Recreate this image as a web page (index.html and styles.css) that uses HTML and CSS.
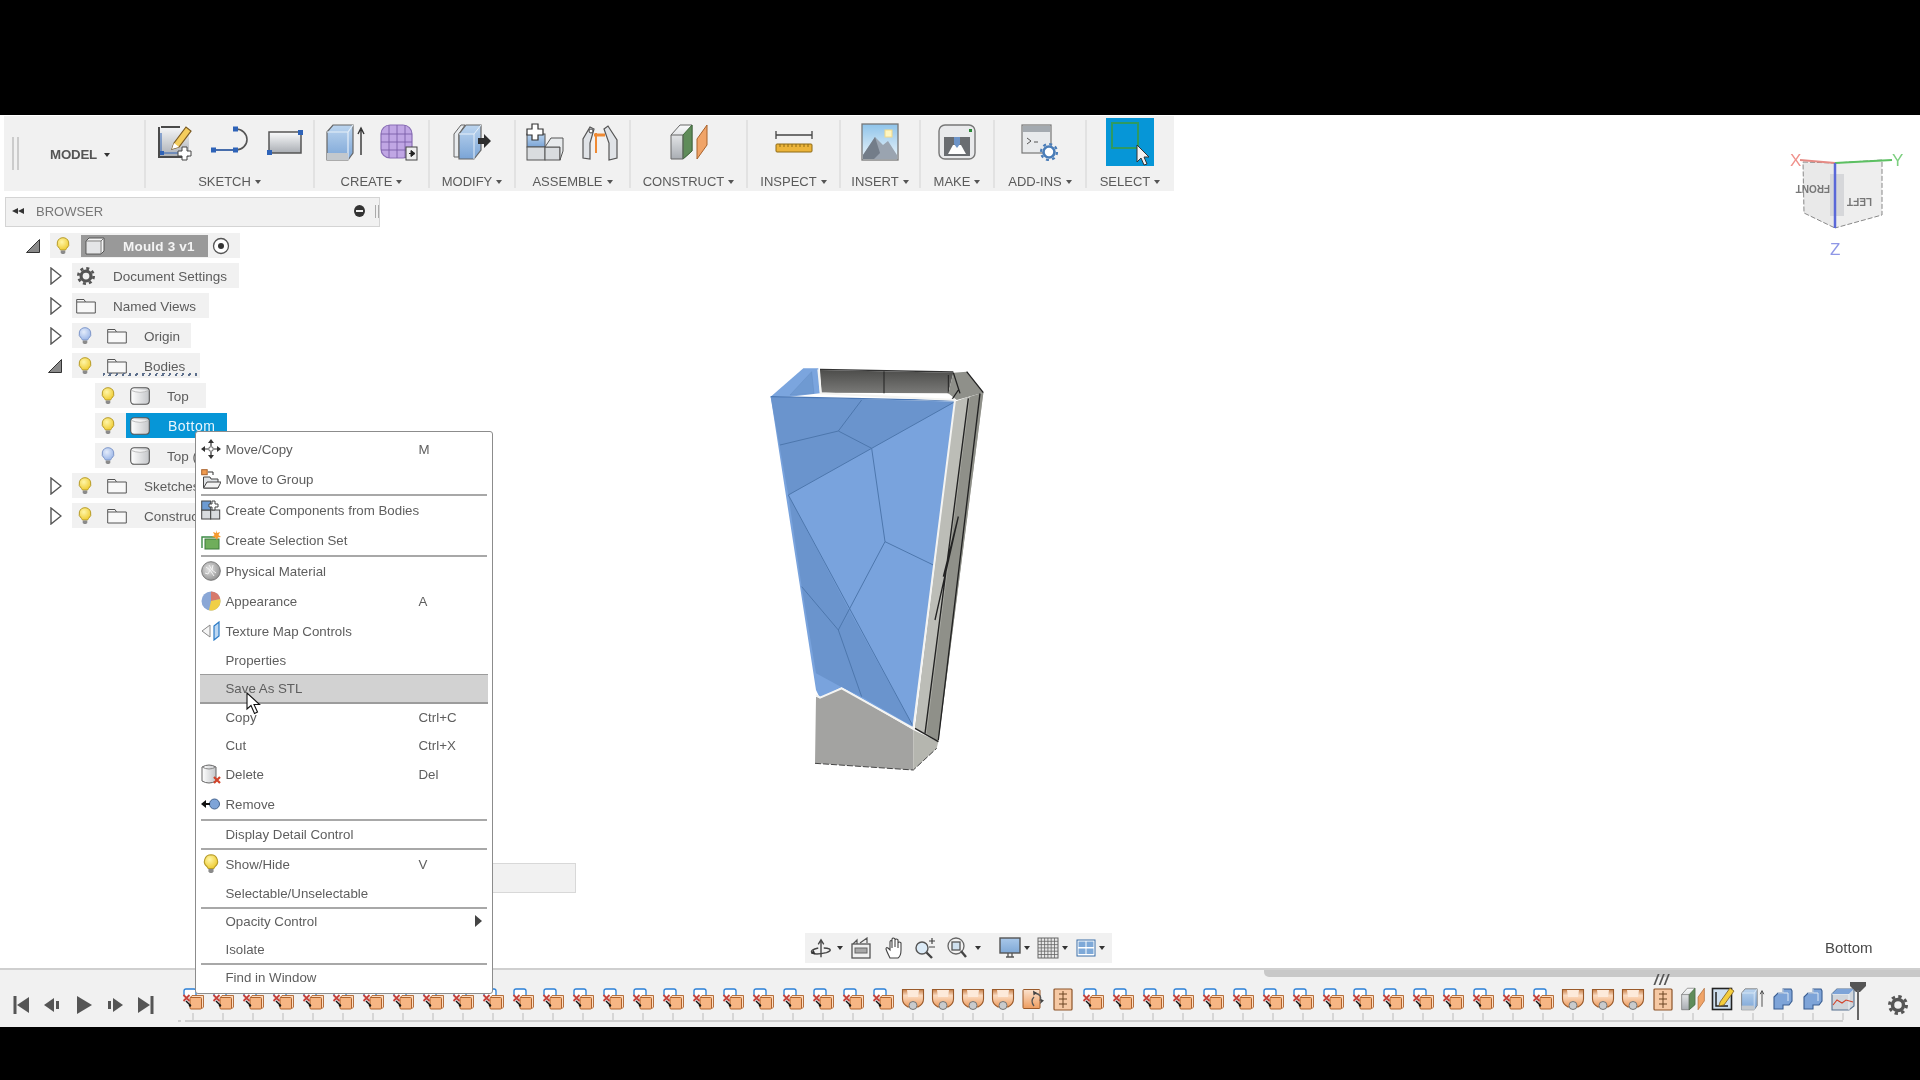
FILE: index.html
```html
<!DOCTYPE html>
<html lang="en">
<head>
<meta charset="utf-8">
<title>Mould 3 v1</title>
<link rel="stylesheet" href="styles.css">
</head>
<body>
<svg class="defs" xmlns="http://www.w3.org/2000/svg">
  <defs>
    <linearGradient id="gGrey" x1="0" y1="0" x2="0" y2="1"><stop offset="0" stop-color="#fafbfc"/><stop offset="1" stop-color="#a9adb3"/></linearGradient>
    <linearGradient id="gBlue" x1="0" y1="0" x2="0" y2="1"><stop offset="0" stop-color="#bcd5ef"/><stop offset="1" stop-color="#7aa4d6"/></linearGradient>
    <linearGradient id="gSky" x1="0" y1="0" x2="0" y2="1"><stop offset="0" stop-color="#8fc4ea"/><stop offset="1" stop-color="#eef6fb"/></linearGradient>
    <linearGradient id="gOrange" x1="0" y1="0" x2="0" y2="1"><stop offset="0" stop-color="#fbe3cf"/><stop offset="1" stop-color="#ee9c5e"/></linearGradient>
    <linearGradient id="gCone" x1="0" y1="0" x2="0" y2="1"><stop offset="0" stop-color="#c77f48"/><stop offset=".35" stop-color="#fbdcc3"/><stop offset="1" stop-color="#ee9c5e"/></linearGradient>
    <linearGradient id="gCyl" x1="0" y1="0" x2="1" y2="0"><stop offset="0" stop-color="#fff"/><stop offset="1" stop-color="#c4c6c9"/></linearGradient>
    <linearGradient id="gScreen" x1="0" y1="0" x2="0" y2="1"><stop offset="0" stop-color="#a9c8ea"/><stop offset="1" stop-color="#7fa8d6"/></linearGradient>
    <radialGradient id="gBulbY" cx=".4" cy=".35" r=".7"><stop offset="0" stop-color="#fff6a8"/><stop offset="1" stop-color="#eec92c"/></radialGradient>
    <radialGradient id="gBulbB" cx=".4" cy=".35" r=".7"><stop offset="0" stop-color="#e4ecfb"/><stop offset="1" stop-color="#97b3e6"/></radialGradient>
    <linearGradient id="gWall" x1="0" y1="0" x2="0" y2="1"><stop offset="0" stop-color="#4d4d4b"/><stop offset="1" stop-color="#7a7a78"/></linearGradient>
    <radialGradient id="gStone" cx=".4" cy=".4" r=".7"><stop offset="0" stop-color="#e4e4e4"/><stop offset="1" stop-color="#8a8a8a"/></radialGradient>

    <symbol id="i-sketch" viewBox="0 0 38 38"><path d="M2 5H25L33 2V34H2Z" fill="url(#gGrey)" stroke="none"/><path d="M5 4H24M3 4V34H28" fill="none" stroke="#4a4a4a" stroke-width="2"/><path d="M5 30H30M5 30V10" fill="none" stroke="#2f62b5" stroke-width="1"/><rect x="4" y="28" width="4" height="4" fill="#2f62b5"/><path d="M18 20L30 4L35 8L23 24L16 26Z" fill="#f4cd5d" stroke="#7b5a22" stroke-width="1.2"/><path d="M18 20L23 24L16 26Z" fill="#fff"/><path d="M26 24h5v4h4v5h-4v4h-5v-4h-4v-5h4z" fill="#fff" stroke="#444"/></symbol>
    <symbol id="i-line" viewBox="0 0 38 38"><path d="M3 27H25A11 10.500 0 0 0 25 6" fill="none" stroke="#555" stroke-width="1.6"/><path d="M3 27H25" stroke="#3a6ab8" stroke-width="1.6"/><rect x="0" y="24.500" width="5" height="5" fill="#2e63b8"/><rect x="22" y="24.500" width="5" height="5" fill="#2e63b8"/><rect x="22" y="3.500" width="5" height="5" fill="#2e63b8"/></symbol>
    <symbol id="i-rect" viewBox="0 0 38 38"><rect x="3" y="9" width="32" height="21" fill="url(#gGrey)" stroke="#555" stroke-width="1.5"/><rect x="1" y="27" width="5" height="5" fill="#2e63b8"/><rect x="32" y="7" width="5" height="5" fill="#2e63b8"/></symbol>
    <symbol id="i-extrude" viewBox="0 0 40 38"><path d="M1 9L7 2H27V30L22 37H1Z" fill="url(#gBlue)" stroke="#666" stroke-width="1.2"/><path d="M1 9H22V37M22 9L27 2" fill="none" stroke="#e6eff8" stroke-width="1.2"/><path d="M1 30H22V37H1Z" fill="#c3c8cd"/><path d="M35 32V7M32 11L35 5L38 11" fill="none" stroke="#333" stroke-width="1.4"/></symbol>
    <symbol id="i-mesh" viewBox="0 0 38 38"><rect x="1" y="2" width="31" height="33" rx="9" fill="#c0a6e4" stroke="#8a6fb6" stroke-width="1.2"/><path d="M1 11H32M1 19H32M1 27H32M9 2V35M17 2V35M25 2V35" stroke="#7a5da8" stroke-width=".9"/><rect x="26" y="24" width="11" height="13" fill="#eee" stroke="#444"/><path d="M29 30.500H33M31 27.500L35 30.500L31 33.500Z" fill="#222" stroke="#222"/></symbol>
    <symbol id="i-modify" viewBox="0 0 38 38"><path d="M1 34V11L8 2H12L6 11V34Z" fill="#e8ebee" stroke="#666"/><path d="M6 36V11L13 2H28V27L21 36Z" fill="url(#gBlue)" stroke="#666" stroke-width="1.2"/><path d="M6 11H21V36M21 11L28 2" fill="none" stroke="#e6eff8"/><path d="M25 15h6v-4l7 7-7 7v-4h-6z" fill="#2e2e2e"/></symbol>
    <symbol id="i-assemble" viewBox="0 0 38 38"><rect x="1" y="11" width="18" height="13" fill="url(#gBlue)" stroke="#555"/><rect x="1" y="24" width="18" height="13" fill="#d9dcdf" stroke="#555"/><rect x="19" y="24" width="15" height="13" fill="#d9dcdf" stroke="#555"/><path d="M19 24L25 15H37V28L34 37V24Z" fill="#e8ebed" stroke="#555"/><path d="M6 1h6v5h5v6h-5v5H6v-5H1V6h5z" fill="#fff" stroke="#333" stroke-width="1.2"/></symbol>
    <symbol id="i-joint" viewBox="0 0 38 38"><path d="M2 35V16L9 4L13 6L9 20V36Z" fill="#e0e3e7" stroke="#555" stroke-width="1.2"/><path d="M36 35V17L27 3L23 6L28 20V37Z" fill="#e0e3e7" stroke="#555" stroke-width="1.2"/><circle cx="10" cy="8" r="2" fill="#fff" stroke="#444"/><path d="M13 12L24 12" stroke="#ef8a34" stroke-width="3"/><path d="M15 10V30" stroke="#ef8a34" stroke-width="2"/></symbol>
    <symbol id="i-construct" viewBox="0 0 38 38"><path d="M1 12L10 2H22V28L13 36H1Z" fill="url(#gGrey)" stroke="#666"/><path d="M13 12L22 2V28L13 36Z" fill="#5f8c5a" stroke="#3f6b3b"/><path d="M1 12H13V36" fill="none" stroke="#666"/><path d="M27 36L27 16L37 2V22Z" fill="#f0a468" stroke="#a9622b"/></symbol>
    <symbol id="i-inspect" viewBox="0 0 38 24"><path d="M1 5H37M1 1V9M37 1V9" fill="none" stroke="#444" stroke-width="1.3"/><rect x="1" y="14" width="36" height="8" rx="1" fill="#ecb43a" stroke="#8e6a15"/><path d="M5 14v3M9 14v3M13 14v3M17 14v3M21 14v3M25 14v3M29 14v3M33 14v3" stroke="#8e6a15"/></symbol>
    <symbol id="i-insert" viewBox="0 0 38 38"><rect x="1" y="1" width="36" height="36" fill="url(#gSky)" stroke="#777" stroke-width="1.300"/><rect x="24" y="7" width="7" height="7" fill="#fff6c0" stroke="#f2d98a"/><path d="M2 32L14 14L22 22L27 18L36 32V36H2Z" fill="#9aa4b0"/><path d="M2 36V32L14 14L19 30L13 36Z" fill="#737d89"/></symbol>
    <symbol id="i-make" viewBox="0 0 38 38"><rect x="1" y="2" width="36" height="34" rx="6" fill="#e9eaec" stroke="#777" stroke-width="1.400"/><rect x="6" y="14" width="26" height="19" fill="#6a6d71"/><path d="M10 31L15 22H23L28 31Z" fill="#fff"/><path d="M16 14H22V21L19 25L16 21Z" fill="#6d94c8"/><rect x="31" y="6" width="3" height="3" fill="#2a8a37"/></symbol>
    <symbol id="i-addins" viewBox="0 0 38 38"><rect x="1" y="2" width="29" height="28" fill="#e8eaec" stroke="#777" stroke-width="1.200"/><rect x="2" y="3" width="27" height="6" fill="#a4aab0"/><path d="M6 15L10 18L6 21M13 19H17" fill="none" stroke="#555"/><circle cx="28" cy="29" r="5.500" fill="#fff" stroke="#4a7db8" stroke-width="2.600"/><circle cx="28" cy="29" r="8" fill="none" stroke="#4a7db8" stroke-width="2.200" stroke-dasharray="3 3.280"/></symbol>
    <symbol id="i-select" viewBox="0 0 48 48"><rect width="48" height="48" fill="#0696d7"/><rect x="6" y="5" width="26" height="25" fill="none" stroke="#2e9a62" stroke-width="2"/><path d="M31 27V44L35 40L38 47L41 46L38 39L43 39Z" fill="#f2f2f2" stroke="#333"/></symbol>

    <symbol id="bulb-y" viewBox="0 0 14 18"><path d="M7 .7A6 6 0 0 0 3.500 11.500L4.500 13H9.500L10.500 11.500A6 6 0 0 0 7 .7Z" fill="url(#gBulbY)" stroke="#b79c2b"/><path d="M4.700 13.500H9.300V16L8 17H6L4.700 16Z" fill="#8a8a8a"/></symbol>
    <symbol id="bulb-b" viewBox="0 0 14 18"><path d="M7 .7A6 6 0 0 0 3.500 11.500L4.500 13H9.500L10.500 11.500A6 6 0 0 0 7 .7Z" fill="url(#gBulbB)" stroke="#7f97c9"/><path d="M4.700 13.500H9.300V16L8 17H6L4.700 16Z" fill="#8a8a8a"/></symbol>
    <symbol id="folder" viewBox="0 0 20 16"><path d="M.7 15V1.500H8L9.500 4H19.300V15Z" fill="#f8f8f8" stroke="#555" stroke-width="1"/><path d="M1 4H9.500" stroke="#555"/></symbol>
    <symbol id="cyl" viewBox="0 0 20 18"><rect x=".7" y=".7" width="18.600" height="16.600" rx="3.500" fill="url(#gCyl)" stroke="#555" stroke-width="1.100"/><path d="M1.500 3.500Q10 7 18.500 3.500" fill="#fff" stroke="#bbb"/></symbol>
    <symbol id="comp" viewBox="0 0 20 18"><path d="M1 4L4 1H19V14L16 17H1Z" fill="#f4f4f4" stroke="#555"/><path d="M1 4H16V17M16 4L19 1" fill="none" stroke="#777"/><rect x="2" y="5" width="13" height="11" fill="#e4e5e7"/></symbol>
    <symbol id="gear" viewBox="0 0 20 20"><circle cx="10" cy="10" r="5.500" fill="none" stroke="#555" stroke-width="3.500"/><circle cx="10" cy="10" r="8.500" fill="none" stroke="#555" stroke-width="3" stroke-dasharray="3.340 3.340"/></symbol>
    <symbol id="radio" viewBox="0 0 18 18"><circle cx="9" cy="9" r="7.500" fill="#fff" stroke="#555" stroke-width="1.300"/><circle cx="9" cy="9" r="3" fill="#333"/></symbol>
    <symbol id="exp-r" viewBox="0 0 12 18"><path d="M1 1L11 9L1 17Z" fill="#fff" stroke="#555" stroke-width="1.400"/></symbol>
    <symbol id="exp-d" viewBox="0 0 14 14"><path d="M13.500 .5V13.500H.5Z" fill="#8a8a8a" stroke="#333"/></symbol>

    <symbol id="m-move" viewBox="0 0 20 20"><path d="M10 4V7M10 13V16M4 10H7M13 10H16" stroke="#333" stroke-width="1.200"/><path d="M10 0L13 4H7ZM10 20L13 16H7ZM0 10L4 7V13ZM20 10L16 7V13Z" fill="#333"/><circle cx="10" cy="10" r="2.300" fill="#fff" stroke="#555"/></symbol>
    <symbol id="m-group" viewBox="0 0 20 20"><rect x=".7" y=".7" width="5.500" height="5" fill="#ef9a4e" stroke="#a9622b"/><path d="M7 3H12V6" fill="none" stroke="#333"/><path d="M2.500 19V8H9L10 10H17V19Z" fill="#dfe2e5" stroke="#444"/><path d="M2.500 19L6 13H20L17 19Z" fill="#f3f3f3" stroke="#444"/></symbol>
    <symbol id="m-comps" viewBox="0 0 20 20"><rect x=".7" y="10" width="9" height="9" fill="#d9dcdf" stroke="#444"/><rect x="9.700" y="10" width="9" height="9" fill="#d9dcdf" stroke="#444"/><rect x=".7" y="1" width="9" height="9" fill="#6d9bd2" stroke="#444"/><path d="M11 1h3v3h3v3h-3v3h-3V7H8V4h3z" fill="#fff" stroke="#444"/></symbol>
    <symbol id="m-selset" viewBox="0 0 20 20"><path d="M1 18V7H14" fill="none" stroke="#3c8a45" stroke-width="1.400"/><rect x="4" y="9" width="14" height="10" fill="#6fae5b" stroke="#3c7a3a"/><path d="M15 0L16 3L19 2L17.500 5L20 7L17 7.500L16 10L14 7.500L11 7L13.500 5L12 2L15 3Z" fill="#f59a2e"/></symbol>
    <symbol id="m-phys" viewBox="0 0 20 20"><circle cx="10" cy="10" r="9.300" fill="url(#gStone)" stroke="#777"/><path d="M5 6L9 9L7 13M12 4L11 9L15 12M9 9L13 15M4 12L7 13M11 9L8 4" fill="none" stroke="#f2f2f2"/></symbol>
    <symbol id="m-app" viewBox="0 0 20 20"><circle cx="10" cy="10" r="9.500" fill="#8aa7d6"/><path d="M10 10L10 .5A9.500 9.500 0 0 1 19.300 8Z" fill="#d77a6c"/><path d="M10 10L19.300 8A9.500 9.500 0 0 1 8 19.300Z" fill="#f0cf47"/></symbol>
    <symbol id="m-tex" viewBox="0 0 20 20"><path d="M1 10L9 4V16Z" fill="#f5f5f5" stroke="#888"/><path d="M13 5L18 1V15L13 19Z" fill="#bcd7f2" stroke="#2b7bc6" stroke-width="1.200"/></symbol>
    <symbol id="m-del" viewBox="0 0 20 20"><path d="M1 3Q8 -1 15 3V17Q8 21 1 17Z" fill="url(#gCyl)" stroke="#666"/><path d="M1 3Q8 7 15 3" fill="none" stroke="#888"/><path d="M13 13L19 19M19 13L13 19" stroke="#d2432a" stroke-width="2.200"/></symbol>
    <symbol id="m-rem" viewBox="0 0 20 20"><circle cx="13.500" cy="10" r="5" fill="#7ea4d8" stroke="#44648f"/><path d="M0 10L5 6V9H9V11H5V14Z" fill="#111"/></symbol>

    <symbol id="tx" viewBox="0 0 24 24"><path d="M3 9V4Q3 2 5 2H13Q15 2 15 4V9" fill="#fff" stroke="#2a7fd6" stroke-width="1.300"/><path d="M9 11L11 8.500H22.500V20L20.500 22" fill="#fbdcc3" stroke="#b0622a" stroke-width=".9"/><rect x="9" y="10.500" width="11.500" height="11.500" rx="1" fill="#f7b684" stroke="#b0622a"/><path d="M2.500 8L8.500 14M8.500 8L2.500 14" stroke="#c8423b" stroke-width="1.800"/><path d="M5 14L9 18" stroke="#111" stroke-width="1.500"/><circle cx="9" cy="18.500" r="1.200" fill="#111"/></symbol>
    <symbol id="tcone" viewBox="0 0 24 24"><path d="M1.500 2.500H22.500V12Q22.500 17 17 20H7Q1.500 17 1.500 12Z" fill="url(#gCone)" stroke="#9a5a2a" stroke-width="1.100"/><path d="M6 3L7 10H17L18 3" fill="#fdeadb"/><circle cx="12" cy="18.500" r="4" fill="#c9cbcd" stroke="#777"/></symbol>
    <symbol id="tsync" viewBox="0 0 24 24"><rect x="2" y="2.500" width="17" height="19" rx="1" fill="url(#gOrange)" stroke="#9a5a2a"/><path d="M14 6Q22 8 19 14M13 19Q9 14 13 10" fill="none" stroke="#555" stroke-width="1.300"/><path d="M12 3.500L16 6L12.500 8.500ZM20 12L23 13.500L19 17Z" fill="#444"/></symbol>
    <symbol id="ttable" viewBox="0 0 24 24"><rect x="3" y="2" width="18" height="21" rx="1" fill="#f6c9a4" stroke="#8d5428" stroke-width="1.200"/><path d="M12 4V21M8 7H16M8 12H16M8 17H16" stroke="#6b4423" stroke-width="1"/></symbol>
    <symbol id="tcomb" viewBox="0 0 24 24"><path d="M3 22V10L7 6H12V2H20L21 4V14L18 18H12V22Z" fill="#7ea4d8" stroke="#3a5e92" stroke-width="1.100"/><path d="M12 6V2M7 6H17V14" fill="none" stroke="#dde8f5"/></symbol>
    <symbol id="tform" viewBox="0 0 24 24"><path d="M1 7L6 2H23V19L18 23H1Z" fill="#d0d5db" stroke="#56718f" stroke-width="1.100"/><path d="M1 7H18V23M18 7L23 2" fill="none" stroke="#eef2f5"/><path d="M1 7L6 2H23L18 7Z" fill="#7ea4d8"/><path d="M2 18L6 13L11 16L15 13L22 15" fill="none" stroke="#d2432a" stroke-width="1.100"/></symbol>
    <symbol id="tsk" viewBox="0 0 24 24"><rect x="1.500" y="1.500" width="19" height="21" fill="#cfe0f0" stroke="#222" stroke-width="1.600"/><path d="M5 5V19H17" fill="none" stroke="#222" stroke-width="1.500"/><path d="M9 15L19 1L23 4L13 18L8 19Z" fill="#f4cd3d" stroke="#7b5a22" stroke-width=".8"/></symbol>

    <symbol id="n-orbit" viewBox="0 0 24 24"><path d="M12 22V5M9 8L12 3L15 8" fill="none" stroke="#444" stroke-width="1.500"/><path d="M9 12Q0 14 2 17Q5 20 18 17Q24 15 21 13Q19 12 15 12" fill="none" stroke="#444" stroke-width="1.500"/><path d="M4 14L1 18L6 19Z" fill="#333"/></symbol>
    <symbol id="n-cam" viewBox="0 0 20 22"><path d="M2 7L6 3V7M9 6L16 1V6" fill="none" stroke="#555" stroke-width="1.200"/><rect x="1" y="7" width="18" height="14" fill="#f1f1f1" stroke="#555" stroke-width="1.300"/><rect x="4" y="11" width="12" height="5" fill="#a8a8a8" stroke="#666"/></symbol>
    <symbol id="n-hand" viewBox="0 0 20 22"><path d="M5 21Q2 15 1 12Q1 10 3 11L5 13V5Q5 3 7 4V11V2Q8 0 10 2V10V3Q11 1 13 3V11V6Q14 4 16 6V13Q16 19 13 21Z" fill="#fff" stroke="#444" stroke-width="1.100"/></symbol>
    <symbol id="n-zoom" viewBox="0 0 22 22"><circle cx="8" cy="11" r="6" fill="#dcebf7" stroke="#555" stroke-width="1.400"/><path d="M12.500 15.500L18 21" stroke="#444" stroke-width="2.400"/><path d="M15 4H21M18 1V7M15 10H21" stroke="#444" stroke-width="1.200"/></symbol>
    <symbol id="n-fit" viewBox="0 0 20 22"><circle cx="9" cy="9" r="8" fill="#f2f2f2" stroke="#666" stroke-width="1.300"/><rect x="5" y="5" width="8" height="8" fill="#cfe0ee" stroke="#555" stroke-width="1.300"/><path d="M14 14L19 20" stroke="#444" stroke-width="2.400"/></symbol>
    <symbol id="n-disp" viewBox="0 0 22 22"><rect x="1" y="1" width="20" height="15" fill="url(#gScreen)" stroke="#555" stroke-width="1.400"/><path d="M7 20H15M9 16V20M13 16V20" stroke="#555" stroke-width="1.300"/></symbol>
    <symbol id="n-grid" viewBox="0 0 22 22"><rect x="1" y="1" width="20" height="20" fill="#e8e8e8" stroke="#666"/><path d="M4.300 1V21M7.600 1V21M10.900 1V21M14.200 1V21M17.500 1V21M1 4.300H21M1 7.600H21M1 10.900H21M1 14.200H21M1 17.500H21" stroke="#666" stroke-width=".8"/></symbol>
    <symbol id="n-view" viewBox="0 0 20 20"><rect x="1" y="2" width="18" height="16" fill="#fff" stroke="#3a6ea8"/><rect x="2.500" y="3.500" width="7" height="5.500" fill="#7ea9d8"/><rect x="10.500" y="3.500" width="7" height="5.500" fill="#7ea9d8"/><rect x="2.500" y="10.500" width="7" height="5.500" fill="#7ea9d8"/><rect x="10.500" y="10.500" width="7" height="5.500" fill="#7ea9d8"/></symbol>
  </defs>
</svg>

<div class="black-top"></div>
<main class="app">
  <header class="toolbar">
    <div class="tg tg-model"><span class="grip"></span><span class="model-label">MODEL<i class="caret dark"></i></span></div>
    <div class="tg tg-sketch"><div class="ticons g17"><svg class="ic"><use href="#i-sketch"/></svg><svg class="ic"><use href="#i-line"/></svg><svg class="ic"><use href="#i-rect"/></svg></div><div class="tlabel">SKETCH<i class="caret"></i></div></div>
    <div class="tg tg-create"><div class="ticons g14"><svg class="ic wide"><use href="#i-extrude"/></svg><svg class="ic"><use href="#i-mesh"/></svg></div><div class="tlabel">CREATE<i class="caret"></i></div></div>
    <div class="tg tg-modify"><div class="ticons"><svg class="ic"><use href="#i-modify"/></svg></div><div class="tlabel">MODIFY<i class="caret"></i></div></div>
    <div class="tg tg-assemble"><div class="ticons g17"><svg class="ic"><use href="#i-assemble"/></svg><svg class="ic"><use href="#i-joint"/></svg></div><div class="tlabel">ASSEMBLE<i class="caret"></i></div></div>
    <div class="tg tg-construct"><div class="ticons"><svg class="ic"><use href="#i-construct"/></svg></div><div class="tlabel">CONSTRUCT<i class="caret"></i></div></div>
    <div class="tg tg-inspect"><div class="ticons"><svg class="ic-rule"><use href="#i-inspect"/></svg></div><div class="tlabel">INSPECT<i class="caret"></i></div></div>
    <div class="tg tg-insert"><div class="ticons"><svg class="ic"><use href="#i-insert"/></svg></div><div class="tlabel">INSERT<i class="caret"></i></div></div>
    <div class="tg tg-make"><div class="ticons"><svg class="ic"><use href="#i-make"/></svg></div><div class="tlabel">MAKE<i class="caret"></i></div></div>
    <div class="tg tg-addins"><div class="ticons"><svg class="ic"><use href="#i-addins"/></svg></div><div class="tlabel">ADD-INS<i class="caret"></i></div></div>
    <div class="tg tg-select"><div class="ticons"><svg class="ic-select"><use href="#i-select"/></svg></div><div class="tlabel">SELECT<i class="caret"></i></div></div>
  </header>

  <section class="browser-head">
    <span class="rew"><i></i><i></i></span>
    <span class="browser-title">BROWSER</span>
    <span class="minus"></span>
    <span class="bgrip"></span>
  </section>

  <nav class="tree">
    <div class="row d0"><svg class="exp-d"><use href="#exp-d"/></svg><div class="cell root-cell"><svg class="bulb"><use href="#bulb-y"/></svg><div class="root-name"><svg class="ti-comp"><use href="#comp"/></svg><b>Mould 3 v1</b></div><svg class="ti-radio"><use href="#radio"/></svg></div></div>
    <div class="row d1"><svg class="exp-r"><use href="#exp-r"/></svg><div class="cell nb pr12"><svg class="ti-icon"><use href="#gear"/></svg><span class="tx">Document Settings</span></div></div>
    <div class="row d1"><svg class="exp-r"><use href="#exp-r"/></svg><div class="cell nb pr13"><svg class="ti-icon"><use href="#folder"/></svg><span class="tx">Named Views</span></div></div>
    <div class="row d1"><svg class="exp-r"><use href="#exp-r"/></svg><div class="cell pr11"><svg class="bulb"><use href="#bulb-b"/></svg><svg class="ti-icon after"><use href="#folder"/></svg><span class="tx">Origin</span></div></div>
    <div class="row d1"><svg class="exp-d2"><use href="#exp-d"/></svg><div class="cell pr15 wavy"><svg class="bulb"><use href="#bulb-y"/></svg><svg class="ti-icon after"><use href="#folder"/></svg><span class="tx">Bodies</span></div></div>
    <div class="row d2"><div class="cell pr17"><svg class="bulb"><use href="#bulb-y"/></svg><svg class="ti-icon after"><use href="#cyl"/></svg><span class="tx">Top</span></div></div>
    <div class="row d2"><div class="cell cell-sel"><svg class="bulb"><use href="#bulb-y"/></svg><div class="sel"><svg class="ti-icon"><use href="#cyl"/></svg><span class="tx">Bottom</span></div></div></div>
    <div class="row d2"><div class="cell pr17"><svg class="bulb"><use href="#bulb-b"/></svg><svg class="ti-icon after"><use href="#cyl"/></svg><span class="tx">Top (1)</span></div></div>
    <div class="row d1"><svg class="exp-r"><use href="#exp-r"/></svg><div class="cell pr17"><svg class="bulb"><use href="#bulb-y"/></svg><svg class="ti-icon after"><use href="#folder"/></svg><span class="tx">Sketches</span></div></div>
    <div class="row d1"><svg class="exp-r"><use href="#exp-r"/></svg><div class="cell pr17"><svg class="bulb"><use href="#bulb-y"/></svg><svg class="ti-icon after"><use href="#folder"/></svg><span class="tx">Construction</span></div></div>
  </nav>

  <svg class="model" viewBox="0 0 840 1290">
    <path d="M92 140L190 55H235L240 130L150 140Z" fill="#7ba5de"/>
    <path d="M150 135L215 65L222 130Z" fill="#6f9ad2" stroke="#5f86bd"/>
    <path d="M240 60L640 68L625 130L245 128Z" fill="url(#gWall)"/>
    <path d="M432 64V130M625 75L625 130" stroke="#222" stroke-width="3"/>
    <path d="M240 58L640 66" stroke="#333" stroke-width="4"/>
    <path d="M640 68L680 65L730 128L650 150L625 130Z" fill="#8f908a"/>
    <path d="M645 155L730 128L595 1175L525 1135Z" fill="#a9aaa3"/>
    <path d="M645 155L685 140L555 1150L525 1135Z" fill="#bcbdb7"/>
    <path d="M690 140L730 128L595 1175L560 1150Z" fill="#8f9089"/>
    <path d="M685 145L555 1150M720 130L595 1170M655 500L585 810M610 680L655 500M635 150L655 120M680 65L730 128M640 68L660 130" stroke="#222" stroke-width="4" fill="none"/>
    <path d="M92 140L645 155L520 1135L305 1012L240 1045L228 1020Z" fill="#79a3dd"/>
    <path d="M92 140L645 155L395 295L145 435Z" fill="#6a94cd"/>
    <path d="M145 435L330 785L295 840L185 710Z" fill="#6a94cd"/>
    <path d="M185 710L295 840L365 1040L305 1012L228 970Z" fill="#6a94cd"/>
    <path d="M295 840L330 785L520 1130L365 1040Z" fill="#6a94cd"/>
    <path d="M120 285L295 243L365 150M295 243L395 295M645 155L145 435M395 295L435 575L580 645M435 575L295 840M145 435L520 1130M185 710L295 840L365 1040" fill="none" stroke="#4d77ad" stroke-width="3"/>
    <path d="M92 140L645 152" stroke="#4b78b5" stroke-width="4"/>
    <path d="M228 1040L240 1045L305 1015L520 1140V1260L225 1240Z" fill="#a3a3a1"/>
    <path d="M520 1140L595 1175L590 1195L520 1260Z" fill="#b5b6af"/>
    <path d="M525 1135L595 1175" stroke="#222" stroke-width="4"/>
    <path d="M225 1240L520 1260L590 1195" fill="none" stroke="#444" stroke-width="3" stroke-dasharray="18 6"/>
    <path d="M235 58L242 130L645 150L520 1135L305 1015L240 1043L228 1035" fill="none" stroke="#f4f4f2" stroke-width="6"/>
  </svg>

  <svg class="viewcube" viewBox="0 0 150 125">
    <path d="M33 22L65 23V88L34 73Z" fill="#e9e9e9" stroke="#888" stroke-dasharray="5 2"/>
    <path d="M65 23L112 20V75L65 88Z" fill="#eeeeee" stroke="#888" stroke-dasharray="5 2"/>
    <rect x="60" y="34" width="14" height="42" fill="#d6d7da"/>
    <text class="cube-t" transform="translate(60 45) rotate(180)">FRONT</text>
    <text class="cube-t" transform="translate(102 58) rotate(180)">LEFT</text>
    <path d="M30 20L65 23" stroke="#e58a84" stroke-width="2"/>
    <path d="M65 23L122 20" stroke="#5cc062" stroke-width="2"/>
    <path d="M65 23V88" stroke="#5a68d8" stroke-width="2.500"/>
    <text class="ax x" x="20" y="26">X</text>
    <text class="ax y" x="122" y="26">Y</text>
    <text class="ax z" x="60" y="115">Z</text>
  </svg>

  <div class="ghost-box"></div>
  <div class="sel-name">Bottom</div>

  <div class="navbar">
    <svg class="nv"><use href="#n-orbit"/></svg><i class="caret dark ml5"></i>
    <svg class="nv nw20 ml8"><use href="#n-cam"/></svg>
    <svg class="nv nw20 ml14"><use href="#n-hand"/></svg>
    <svg class="nv ml9"><use href="#n-zoom"/></svg>
    <svg class="nv nw20 ml11"><use href="#n-fit"/></svg><i class="caret dark ml8"></i>
    <svg class="nv ml18"><use href="#n-disp"/></svg><i class="caret dark ml3"></i>
    <svg class="nv ml7"><use href="#n-grid"/></svg><i class="caret dark ml3"></i>
    <svg class="nv nw20 ml8"><use href="#n-view"/></svg><i class="caret dark ml3"></i>
  </div>

  <footer class="timeline">
    <div class="transport">
      <svg class="pb" viewBox="0 0 16 18"><path d="M2 0V18" stroke="#555" stroke-width="3"/><path d="M16 1V17L4 9Z" fill="#555"/></svg>
      <svg class="pb" viewBox="0 0 16 18"><path d="M10 2V16L0 9Z" fill="#555"/><rect x="12" y="5" width="3" height="8" fill="#555"/></svg>
      <svg class="pb" viewBox="0 0 16 18"><path d="M1 0V18L16 9Z" fill="#555"/></svg>
      <svg class="pb" viewBox="0 0 16 18"><path d="M6 2V16L16 9Z" fill="#555"/><rect x="1" y="5" width="3" height="8" fill="#555"/></svg>
      <svg class="pb" viewBox="0 0 16 18"><path d="M0 1V17L12 9Z" fill="#555"/><path d="M14 0V18" stroke="#555" stroke-width="3"/></svg>
    </div>
    <div class="track">
      <span class="ti"><svg><use href="#tx"/></svg></span><span class="ti"><svg><use href="#tx"/></svg></span><span class="ti"><svg><use href="#tx"/></svg></span><span class="ti"><svg><use href="#tx"/></svg></span><span class="ti"><svg><use href="#tx"/></svg></span><span class="ti"><svg><use href="#tx"/></svg></span><span class="ti"><svg><use href="#tx"/></svg></span><span class="ti"><svg><use href="#tx"/></svg></span>
      <span class="ti"><svg><use href="#tx"/></svg></span><span class="ti"><svg><use href="#tx"/></svg></span><span class="ti"><svg><use href="#tx"/></svg></span><span class="ti"><svg><use href="#tx"/></svg></span><span class="ti"><svg><use href="#tx"/></svg></span><span class="ti"><svg><use href="#tx"/></svg></span><span class="ti"><svg><use href="#tx"/></svg></span><span class="ti"><svg><use href="#tx"/></svg></span>
      <span class="ti"><svg><use href="#tx"/></svg></span><span class="ti"><svg><use href="#tx"/></svg></span><span class="ti"><svg><use href="#tx"/></svg></span><span class="ti"><svg><use href="#tx"/></svg></span><span class="ti"><svg><use href="#tx"/></svg></span><span class="ti"><svg><use href="#tx"/></svg></span><span class="ti"><svg><use href="#tx"/></svg></span><span class="ti"><svg><use href="#tx"/></svg></span>
      <span class="ti"><svg><use href="#tcone"/></svg></span><span class="ti"><svg><use href="#tcone"/></svg></span><span class="ti"><svg><use href="#tcone"/></svg></span><span class="ti"><svg><use href="#tcone"/></svg></span><span class="ti"><svg><use href="#tsync"/></svg></span><span class="ti"><svg><use href="#ttable"/></svg></span>
      <span class="ti"><svg><use href="#tx"/></svg></span><span class="ti"><svg><use href="#tx"/></svg></span><span class="ti"><svg><use href="#tx"/></svg></span><span class="ti"><svg><use href="#tx"/></svg></span><span class="ti"><svg><use href="#tx"/></svg></span><span class="ti"><svg><use href="#tx"/></svg></span><span class="ti"><svg><use href="#tx"/></svg></span><span class="ti"><svg><use href="#tx"/></svg></span>
      <span class="ti"><svg><use href="#tx"/></svg></span><span class="ti"><svg><use href="#tx"/></svg></span><span class="ti"><svg><use href="#tx"/></svg></span><span class="ti"><svg><use href="#tx"/></svg></span><span class="ti"><svg><use href="#tx"/></svg></span><span class="ti"><svg><use href="#tx"/></svg></span><span class="ti"><svg><use href="#tx"/></svg></span><span class="ti"><svg><use href="#tx"/></svg></span>
      <span class="ti"><svg><use href="#tcone"/></svg></span><span class="ti"><svg><use href="#tcone"/></svg></span><span class="ti"><svg><use href="#tcone"/></svg></span><span class="ti"><svg><use href="#ttable"/></svg></span>
      <span class="ti"><svg><use href="#i-construct"/></svg></span><span class="ti"><svg><use href="#tsk"/></svg></span><span class="ti"><svg><use href="#i-extrude"/></svg></span><span class="ti"><svg><use href="#tcomb"/></svg></span><span class="ti"><svg><use href="#tcomb"/></svg></span><span class="ti"><svg><use href="#tform"/></svg></span>
    </div>
    <svg class="tl-gear"><use href="#gear"/></svg>
    <div class="thumb"></div>
    <div class="group-mark">///</div>
    <svg class="marker" viewBox="0 0 16 38"><path d="M0 0H16V4L10 10H6L0 4Z" fill="#555"/><rect x="7" y="8" width="2" height="30" fill="#666"/></svg>
  </footer>

  <div class="ctx">
    <div class="mi"><svg class="mic"><use href="#m-move"/></svg><span class="ml">Move/Copy</span><span class="ms">M</span></div>
    <div class="mi"><svg class="mic"><use href="#m-group"/></svg><span class="ml">Move to Group</span></div>
    <div class="sep"></div>
    <div class="mi"><svg class="mic"><use href="#m-comps"/></svg><span class="ml">Create Components from Bodies</span></div>
    <div class="mi"><svg class="mic"><use href="#m-selset"/></svg><span class="ml">Create Selection Set</span></div>
    <div class="sep"></div>
    <div class="mi"><svg class="mic"><use href="#m-phys"/></svg><span class="ml">Physical Material</span></div>
    <div class="mi"><svg class="mic"><use href="#m-app"/></svg><span class="ml">Appearance</span><span class="ms">A</span></div>
    <div class="mi"><svg class="mic"><use href="#m-tex"/></svg><span class="ml">Texture Map Controls</span></div>
    <div class="mi p28"><span class="mic"></span><span class="ml">Properties</span></div>
    <div class="mi hover"><span class="mic"></span><span class="ml">Save As STL</span></div>
    <div class="mi p27"><span class="mic"></span><span class="ml">Copy</span><span class="ms">Ctrl+C</span></div>
    <div class="mi p28"><span class="mic"></span><span class="ml">Cut</span><span class="ms">Ctrl+X</span></div>
    <div class="mi"><svg class="mic"><use href="#m-del"/></svg><span class="ml">Delete</span><span class="ms">Del</span></div>
    <div class="mi"><svg class="mic"><use href="#m-rem"/></svg><span class="ml">Remove</span></div>
    <div class="sep"></div>
    <div class="mi p28"><span class="mic"></span><span class="ml">Display Detail Control</span></div>
    <div class="sep"></div>
    <div class="mi"><svg class="mic"><use href="#bulb-y"/></svg><span class="ml">Show/Hide</span><span class="ms">V</span></div>
    <div class="mi p28"><span class="mic"></span><span class="ml">Selectable/Unselectable</span></div>
    <div class="sep"></div>
    <div class="mi p27"><span class="mic"></span><span class="ml">Opacity Control</span><i class="sub"></i></div>
    <div class="mi p28"><span class="mic"></span><span class="ml">Isolate</span></div>
    <div class="sep"></div>
    <div class="mi p27"><span class="mic"></span><span class="ml">Find in Window</span></div>
  </div>

  <svg class="cursor" viewBox="0 0 16 23"><path d="M1 1V17L5 13.500L8.500 21.500L11.500 20L8 12.500H13.500Z" fill="#fff" stroke="#111" stroke-width="1.100"/></svg>
</main>
<div class="black-bottom"></div>
</body>
</html>
```

FILE: styles.css
```css
* { box-sizing: border-box; }
html, body { margin: 0; height: 100%; }
body {
  display: flex;
  flex-direction: column;
  height: 1080px;
  overflow: hidden;
  background: #000;
  font-family: "Liberation Sans", Arial, sans-serif;
  color: #555;
}
.defs { position: absolute; width: 0; height: 0; }
.black-top { height: 115px; flex: none; background: #000; }
.black-bottom { height: 53px; flex: none; background: #000; }

.app {
  position: relative;
  flex: none;
  height: 912px;
  background: #fff;
  display: flex;
  flex-direction: column;
  overflow: hidden;
  filter: blur(.45px);
}

/* toolbar */
.toolbar {
  display: flex;
  flex: none;
  width: 1170px;
  height: 75px;
  margin: 1px 0 0 4px;
  background: #f1f1f1;
}
.tg {
  position: relative;
  display: flex;
  flex-direction: column;
  align-items: center;
  flex: none;
}
.tg + .tg::before {
  content: "";
  position: absolute;
  left: -1px;
  top: 4px;
  bottom: 3px;
  width: 2px;
  background: #e2e2e2;
}
.tg-model { width: 141px; flex-direction: row; }
.tg-sketch { width: 169px; }
.tg-create { width: 115px; }
.tg-modify { width: 86px; }
.tg-assemble { width: 115px; }
.tg-construct { width: 117px; }
.tg-inspect { width: 93px; }
.tg-insert { width: 80px; }
.tg-make { width: 74px; }
.tg-addins { width: 92px; }
.tg-select { width: 88px; }
.grip {
  width: 7px;
  height: 33px;
  margin: 0 0 0 8px;
  border-left: 2px solid #ccc;
  border-right: 2px solid #ccc;
}
.model-label {
  margin: 2px 0 0 31px;
  font-size: 13.3px;
  font-weight: 700;
  color: #555;
  letter-spacing: -.2px;
}
.model-label .caret { margin-left: 7px; }
.ticons {
  height: 50px;
  display: flex;
  align-items: center;
  justify-content: center;
  margin-top: 1px;
}
.g17 { gap: 17px; }
.g14 { gap: 14px; }
.ic { width: 38px; height: 38px; display: block; }
.ic.wide { width: 40px; }
.ic-rule { width: 38px; height: 24px; display: block; }
.ic-select { width: 48px; height: 48px; display: block; }
.tlabel {
  margin-top: 7px;
  font-size: 13px;
  line-height: 16px;
  color: #5a5a5a;
  white-space: nowrap;
}
.caret {
  display: inline-block;
  width: 0;
  height: 0;
  margin-left: 4px;
  vertical-align: 2px;
  border-left: 3.5px solid transparent;
  border-right: 3.5px solid transparent;
  border-top: 4px solid #555;
}
.caret.dark { border-top-color: #333; }

/* browser header */
.browser-head {
  flex: none;
  display: flex;
  align-items: center;
  width: 375px;
  height: 30px;
  margin: 6px 0 0 5px;
  background: #f1f1f1;
  border: 1px solid #d4d4d4;
  padding: 0 0 2px 6px;
}
.rew { display: flex; width: 12px; }
.rew i {
  width: 0;
  height: 0;
  border-top: 3.5px solid transparent;
  border-bottom: 3.5px solid transparent;
  border-right: 6px solid #333;
}
.browser-title { margin-left: 12px; font-size: 13px; color: #777; }
.minus {
  position: relative;
  width: 12px;
  height: 12px;
  margin-left: 251px;
  border-radius: 50%;
  background: #333;
}
.minus::after {
  content: "";
  position: absolute;
  left: 2px;
  right: 2px;
  top: 5px;
  height: 2px;
  background: #f1f1f1;
}
.bgrip {
  width: 4px;
  height: 13px;
  margin-left: 10px;
  border-left: 1px solid #aaa;
  border-right: 1px solid #aaa;
}

/* tree */
.tree { flex: none; display: flex; flex-direction: column; gap: 5px; margin-top: 6px; }
.row { display: flex; align-items: center; height: 25px; }
.d0 { padding-left: 26px; }
.d1 { padding-left: 50px; }
.d2 { padding-left: 95px; }
.exp-d { width: 14px; height: 14px; margin-right: 10px; flex: none; }
.exp-d2 { width: 14px; height: 14px; margin: 0 10px 0 -2px; flex: none; }
.exp-r { width: 12px; height: 18px; margin-right: 10px; flex: none; }
.cell {
  position: relative;
  display: flex;
  align-items: center;
  height: 25px;
  padding-left: 6px;
  background: #f1f1f1;
  font-size: 13.5px;
  color: #5c5c5c;
}
.cell.nb { padding-left: 4px; }
.pr11 { padding-right: 11px; }
.pr12 { padding-right: 12px; }
.pr13 { padding-right: 13px; }
.pr15 { padding-right: 15px; }
.pr17 { padding-right: 17px; }
.bulb { width: 14px; height: 18px; flex: none; }
.ti-icon { width: 20px; height: 18px; flex: none; }
.ti-icon.after { margin-left: 15px; }
.tx { margin: 1px 0 0 17px; white-space: nowrap; }
.wavy::after {
  content: "";
  position: absolute;
  left: 31px;
  right: 3px;
  top: 20px;
  height: 3px;
  background: repeating-linear-gradient(115deg, #5c6f8c 0 2px, transparent 2px 6px);
}
.root-cell { width: 190px; }
.root-name {
  display: flex;
  align-items: center;
  width: 127px;
  height: 22px;
  margin-left: 11px;
  padding-left: 4px;
  background: #999;
}
.ti-comp { width: 20px; height: 18px; flex: none; }
.root-name b { margin: 1px 0 0 18px; color: #f4f4f4; font-size: 13.5px; letter-spacing: .2px; white-space: nowrap; }
.ti-radio { width: 18px; height: 18px; margin-left: 4px; flex: none; }
.cell-sel { padding-right: 0; background: #f1f1f1; }
.sel {
  display: flex;
  align-items: center;
  height: 25px;
  margin-left: 11px;
  padding: 0 12px 0 4px;
  background: #0696d7;
  color: #e8f6fd;
}
.sel .tx { margin-left: 18px; font-size: 14px; letter-spacing: .5px; }

/* free canvas */
.model { position: absolute; left: 740px; top: 235px; width: 280px; height: 430px; }
.viewcube { position: absolute; left: 1770px; top: 25px; width: 150px; height: 125px; filter: blur(.7px); }
.cube-t { font-size: 10px; fill: #777; font-weight: 700; }
.ax { font-size: 17px; }
.ax.x { fill: #f0918b; }
.ax.y { fill: #7ccf7f; }
.ax.z { fill: #8f97e6; }
.ghost-box {
  position: absolute;
  left: 480px;
  top: 748px;
  width: 96px;
  height: 30px;
  background: #f1f1f1;
  border: 1px solid #d8d8d8;
}
.sel-name {
  position: absolute;
  left: 1825px;
  top: 825px;
  font-size: 15px;
  line-height: 16px;
  color: #4a4a4a;
}
.navbar {
  position: absolute;
  left: 805px;
  top: 818px;
  display: flex;
  align-items: center;
  width: 307px;
  height: 30px;
  padding-left: 5px;
  background: #f1f1f1;
}
.navbar .caret { flex: none; vertical-align: 0; }
.nv { width: 22px; height: 22px; flex: none; }
.nw20 { width: 20px; }
.navbar .ml3 { margin-left: 3px; }
.navbar .ml5 { margin-left: 5px; }
.navbar .ml7 { margin-left: 7px; }
.navbar .ml8 { margin-left: 8px; }
.navbar .ml9 { margin-left: 9px; }
.navbar .ml11 { margin-left: 11px; }
.navbar .ml14 { margin-left: 14px; }
.navbar .ml18 { margin-left: 18px; }

/* timeline */
.timeline {
  position: absolute;
  left: 0;
  right: 0;
  bottom: 0;
  height: 59px;
  display: flex;
  background: #f1f1f1;
  border-top: 2px solid #cfcfcf;
}
.transport {
  display: flex;
  flex: none;
  gap: 15.25px;
  width: 178px;
  padding: 26px 0 0 13px;
}
.pb { width: 16px; height: 18px; flex: none; }
.track {
  display: flex;
  flex: none;
  height: 52px;
  padding-top: 17px;
  background:
    linear-gradient(#cfcfcf, #cfcfcf) 7px 100% / 1658px 2px no-repeat,
    repeating-linear-gradient(90deg, #cfcfcf 0 4px, transparent 4px 6px) -7px 100% / 12px 2px no-repeat;
}
.ti {
  position: relative;
  display: flex;
  justify-content: center;
  width: 30px;
  height: 33px;
  flex: none;
}
.ti svg { width: 24px; height: 24px; display: block; }
.ti::after {
  content: "";
  position: absolute;
  left: 14px;
  top: 26px;
  width: 2px;
  height: 7px;
  background: #d6d6d6;
}
.tl-gear { width: 20px; height: 20px; margin: 25px 0 0 30px; flex: none; }
.thumb {
  position: absolute;
  left: 1264px;
  right: 0;
  top: 0;
  height: 7px;
  background: #c8c8c8;
  border-bottom-left-radius: 5px;
}
.group-mark {
  position: absolute;
  left: 1654px;
  top: 4px;
  font-size: 15px;
  line-height: 12px;
  font-weight: 700;
  font-style: italic;
  color: #555;
  letter-spacing: 1px;
}
.marker { position: absolute; left: 1850px; top: 12px; width: 16px; height: 38px; }

/* context menu */
.ctx {
  position: absolute;
  left: 195px;
  top: 316px;
  width: 298px;
  height: 563px;
  padding-top: 2px;
  background: #fff;
  border: 1px solid #8c8c8c;
  border-radius: 3px;
  font-size: 13.3px;
  color: #5e5e5e;
}
.mi {
  position: relative;
  display: flex;
  align-items: center;
  height: 30px;
  padding-left: 5px;
}
.mi.p27 { height: 27px; }
.mi.p28 { height: 28px; }
.mic { display: block; width: 20px; height: 20px; flex: none; }
.ml { width: 193px; margin-left: 4.500px; white-space: nowrap; flex: none; }
.ms { white-space: nowrap; }
.mi.hover {
  margin: 0 4px 0 4px;
  padding-left: 1px;
  background: #d2d2d2;
  border-top: 1px solid #9c9c9c;
  border-bottom: 2px solid #9c9c9c;
}
.sep { height: 2px; margin: 0 5px -1px; background: #a8a8a8; position: relative; }
.sub {
  position: absolute;
  left: 279px;
  top: 7px;
  width: 0;
  height: 0;
  border-top: 6px solid transparent;
  border-bottom: 6px solid transparent;
  border-left: 7px solid #444;
}
.cursor { position: absolute; left: 246px; top: 577px; width: 16px; height: 23px; }
```
